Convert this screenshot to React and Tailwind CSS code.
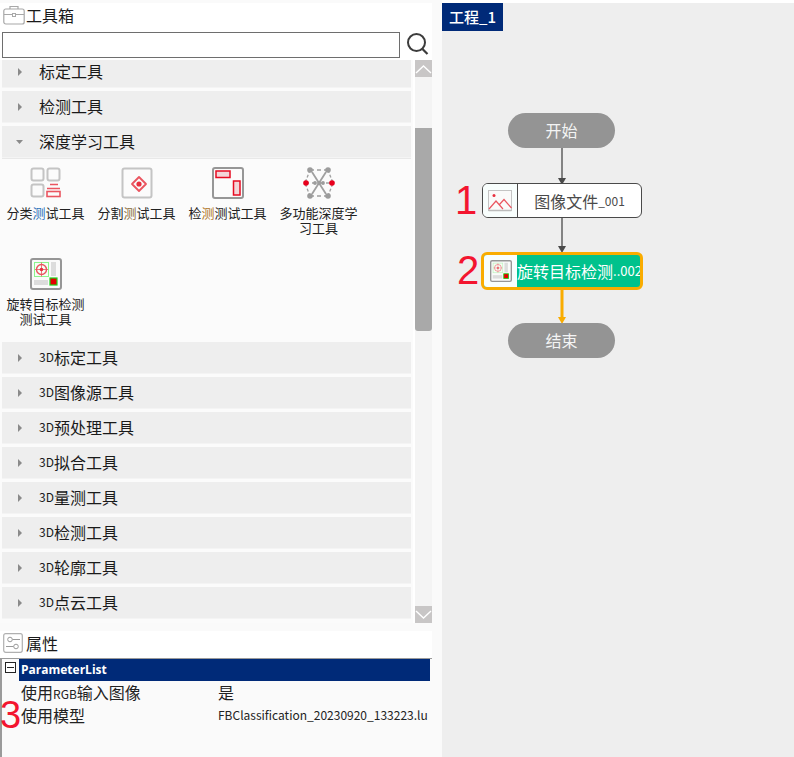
import React from 'react'

const cjk = "font-['Noto_Sans_CJK_SC','Noto_Sans',sans-serif]"

function Row({ name, prefix, open, className }) {
    return (
        <div className={`h-[32px] mb-[3px] pl-[37px] pb-[1px] relative bg-[#eeeeee] flex items-center text-[16px] text-[#1a1a1a] border-b border-[#f4f4f4] ${className || ''}`}>
            <svg width="8" height="8" viewBox="0 0 8 8" className='absolute left-[14px] top-[12px]'>
                {open ? <path d="M0 2 L7 2 L3.5 6 Z" fill="#8a8a8a" /> : <path d="M2 0 L6 4 L2 8 Z" fill="#8a8a8a" />}
            </svg>
            {prefix && <span className='text-[12px]'>{prefix}</span>}
            <span>{name}</span>
        </div>
    )
}

function ClassifyIcon() {
    return (
        <svg width="32" height="32" viewBox="0 0 32 32" fill="none">
            <rect x="1.5" y="1.5" width="12" height="12" rx="2" stroke="#c4c4c4" strokeWidth="2" />
            <rect x="17.5" y="1.5" width="12" height="12" rx="2" stroke="#c4c4c4" strokeWidth="2" />
            <rect x="1.5" y="17.5" width="12" height="12" rx="2" stroke="#c4c4c4" strokeWidth="2" />
            <path d="M20 17.5 H28 M17 21.5 H30" stroke="#ea5560" strokeWidth="1.6" />
            <rect x="17" y="24.5" width="13" height="5" stroke="#ea5560" strokeWidth="1.6" />
        </svg>
    )
}

function SegmentIcon() {
    return (
        <svg width="32" height="32" viewBox="0 0 32 32" fill="none">
            <rect x="1.5" y="1.5" width="29" height="29" rx="2" stroke="#c4c4c4" strokeWidth="2" />
            <path d="M18 10 L25 17 L18 24 L11 17 Z" stroke="#ea5560" strokeWidth="1.8" strokeLinejoin="round" />
            <circle cx="18" cy="17" r="2.6" fill="#e8303f" />
        </svg>
    )
}

function DetectIcon() {
    return (
        <svg width="32" height="32" viewBox="0 0 32 32" fill="none">
            <rect x="1" y="1" width="30" height="30" rx="2" stroke="#969696" strokeWidth="2" />
            <rect x="4" y="4" width="14" height="6.5" fill="#f3d5d8" stroke="#e60b22" strokeWidth="1.5" />
            <rect x="21.5" y="14" width="6.5" height="14" fill="#f3d5d8" stroke="#e60b22" strokeWidth="1.5" />
        </svg>
    )
}

function NetIcon() {
    return (
        <svg width="32" height="32" viewBox="0 0 32 32" fill="none">
            <g stroke="#a0a0a0" strokeWidth="1.3">
                <path d="M7 3 L2 16 L7 29 M25 3 L30 16 L25 29" strokeDasharray="3 2" />
                <path d="M7 3 H25 M7 29 H25 M2 16 H30" strokeDasharray="4 3" />
                <path d="M9 5 L23 27 M23 5 L9 27" strokeWidth="1.8" />
            </g>
            <g fill="#9c9c9c">
                <circle cx="7" cy="3" r="2.8" />
                <circle cx="25" cy="3" r="2.8" />
                <circle cx="7" cy="29" r="2.8" />
                <circle cx="25" cy="29" r="2.8" />
                <circle cx="12" cy="16" r="1.9" />
                <circle cx="16" cy="16" r="1.9" />
                <circle cx="20" cy="16" r="1.9" />
            </g>
            <circle cx="3" cy="16" r="2.8" fill="#e8001c" />
            <circle cx="29" cy="16" r="2.8" fill="#e8001c" />
        </svg>
    )
}

function RotateIcon({ size = 32, faded }) {
    return (
        <svg width={size} height={size} viewBox="0 0 32 32" fill="none">
            <rect x="1" y="1" width="30" height="30" rx="2" fill="#fafafa" stroke="#969696" strokeWidth="2" />
            <rect x="4.5" y="4.5" width="14" height="14" fill="#f5fff5" stroke={faded ? "#bdf0bd" : "#8cf58c"} strokeWidth="1" />
            <circle cx="11.5" cy="11.5" r="5" stroke="#ea5560" strokeWidth="1.4" opacity={faded ? 0.6 : 1} />
            <path d="M11.5 4.5 V18.5 M5 11.5 H18" stroke="#ea5560" strokeWidth="0.8" opacity={faded ? 0.6 : 1} />
            <circle cx="11.5" cy="11.5" r="1.8" fill="#e8303f" opacity={faded ? 0.6 : 1} />
            <rect x="21" y="4" width="5" height="14" fill="#dcdcdc" />
            <rect x="4" y="22" width="14" height="5" fill="#dcdcdc" />
            <rect x="20" y="20" width="7" height="7" fill="#e60000" stroke="#19d419" strokeWidth="1.2" />
        </svg>
    )
}

function ImageIcon() {
    return (
        <svg width="24" height="22" viewBox="0 0 24 22" fill="none">
            <rect x="0.5" y="0.5" width="23" height="20" fill="#fafafa" stroke="#c4c4c4" />
            <path d="M0.5 20.5 H23.5" stroke="#bcbcbc" strokeWidth="1.5" />
            <circle cx="6" cy="5.5" r="1.5" fill="#e8303f" />
            <path d="M1 19 L8 11 L15 19 M11 15 L16 9.5 L23.5 18" stroke="#ea5560" strokeWidth="1.2" />
        </svg>
    )
}

function Tool({ icon, label, className }) {
    return (
        <div className={`w-[91px] flex flex-col items-center text-center text-[13px] leading-[15px] text-[#222] ${className || ''}`}>
            <div className='h-[32px] mb-[6px]'>{icon}</div>
            <div className='w-[80px]'>{label}</div>
        </div>
    )
}

function Pill({ text }) {
    return (
        <div className='w-[107px] h-[35px] pb-[2px] rounded-full bg-[#949494] text-[#f4f4f4] text-[16px] flex items-center justify-center'>
            {text}
        </div>
    )
}

// connector between flow nodes
function Arrow({ height, color = "#4a4a4a", thick }) {
    return (
        <svg width="14" height={height} viewBox={`0 0 14 ${height}`}>
            <path d={`M7 0 V${height - 6}`} stroke={color} strokeWidth={thick ? 3 : 1.3} />
            <path d={`M3 ${height - 7} H11 L7 ${height} Z`} fill={color} />
        </svg>
    )
}

export default function App() {
    return (
        <div className={`w-[794px] h-[757px] overflow-hidden bg-white flex ${cjk}`}>
            {/* left side */}
            <div className='w-[432px] flex flex-col shrink-0'>
                <div className='h-[3px] bg-[#fafafa]' />
                <div className='h-[26px] flex items-center pl-[3px] pb-[2px] text-[16px] text-[#1a1a1a]'>
                    <svg width="22" height="20" viewBox="0 0 22 20" fill="none" className='mr-[1px]'>
                        <rect x="0.8" y="4" width="20.4" height="15" rx="2" stroke="#a8a8a8" strokeWidth="1.2" />
                        <path d="M7 4 V1.5 H15 V4 M1 9.5 H9 M13 9.5 H21" stroke="#a8a8a8" strokeWidth="1.2" />
                        <rect x="9.5" y="8.5" width="3" height="3" stroke="#a8a8a8" />
                    </svg>
                    <span>工具箱</span>
                </div>
                <div className='h-[31px] flex items-start pl-[2px]'>
                    <div className='w-[398px] h-[26px] mt-[3px] border border-[#6e6e6e] bg-white' />
                    <svg width="24" height="24" viewBox="0 0 24 24" fill="none" className='ml-[6px] mt-[3px]'>
                        <circle cx="10.5" cy="10.5" r="8.5" stroke="#3c3c3c" strokeWidth="2" />
                        <path d="M16.5 17 L21.5 22" stroke="#3c3c3c" strokeWidth="2.2" />
                    </svg>
                </div>

                <div className='h-[563px] flex overflow-hidden'>
                    <div className='w-[413px] pl-[2px] pr-[2px] bg-[#fbfbfb]'>
                        <Row name="标定工具" className='-mt-[4px]' />
                        <Row name="检测工具" />
                        <Row name="深度学习工具" open />
                        <div className='h-[181px] -mt-[3px] pt-[8px] bg-[#fbfbfb] border-t border-[#e8e8e8]'>
                            <div className='flex'>
                                <Tool icon={<ClassifyIcon />} label={<span>分类<span className='text-[#1f6fb8]'>测</span>试工具</span>} className='-ml-[2px]' />
                                <Tool icon={<SegmentIcon />} label={<span>分割<span className='text-[#8a6d3b]'>测</span>试工具</span>} />
                                <Tool icon={<DetectIcon />} label={<span>检<span className='text-[#b0761f]'>测</span>测试工具</span>} />
                                <Tool icon={<NetIcon />} label="多功能深度学习工具" />
                            </div>
                            <Tool
                                icon={<RotateIcon />}
                                label="旋转目标检测测试工具"
                                className='mt-[23px] -ml-[2px]'
                            />
                        </div>
                        <div className='h-[3px]' />
                        <Row prefix="3D" name="标定工具" />
                        <Row prefix="3D" name="图像源工具" />
                        <Row prefix="3D" name="预处理工具" />
                        <Row prefix="3D" name="拟合工具" />
                        <Row prefix="3D" name="量测工具" />
                        <Row prefix="3D" name="检测工具" />
                        <Row prefix="3D" name="轮廓工具" />
                        <Row prefix="3D" name="点云工具" />
                    </div>
                    {/* scrollbar */}
                    <div className='w-[17px] ml-[2px] bg-[#f4f4f4] flex flex-col'>
                        <div className='h-[17px] bg-[#c8c6c6] flex items-center justify-center'>
                            <svg width="17" height="10" viewBox="0 0 17 10" fill="none"><path d="M1 9 L8.5 2 L16 9" stroke="#fff" strokeWidth="1.4" /></svg>
                        </div>
                        <div className='h-[51px]' />
                        <div className='h-[203px] bg-[#a9a9a9] rounded-b-[3px]' />
                        <div className='h-[275px]' />
                        <div className='h-[17px] bg-[#c8c6c6] flex items-center justify-center'>
                            <svg width="17" height="10" viewBox="0 0 17 10" fill="none"><path d="M1 1 L8.5 8 L16 1" stroke="#fff" strokeWidth="1.4" /></svg>
                        </div>
                    </div>
                </div>

                {/* properties */}
                <div className='h-[8px] bg-[#fafafa]' />
                <div className='h-[27px] flex items-center pl-[3px] pb-[3px] text-[16px] text-[#1a1a1a]'>
                    <svg width="20" height="20" viewBox="0 0 20 20" fill="none" className='mr-[3px]'>
                        <rect x="0.7" y="0.7" width="18.6" height="18.6" rx="2" stroke="#b0b0b0" strokeWidth="1.2" />
                        <circle cx="7" cy="6.5" r="2.3" stroke="#9a9a9a" />
                        <circle cx="13" cy="13.5" r="2.3" stroke="#9a9a9a" />
                        <path d="M9.5 6.5 H17 M3 13.5 H10.5" stroke="#9a9a9a" />
                    </svg>
                    <span>属性</span>
                </div>
                <div className='relative flex-1 bg-[#fafafa] border-t border-l-2 border-[#9a9a9a]'>
                    <div className='absolute left-[3px] top-[3px] w-[11px] h-[11px] border border-[#222] flex items-center justify-center bg-white'>
                        <div className='w-[7px] h-[1px] bg-[#222]' />
                    </div>
                    <div className='ml-[17px] mr-[2px] h-[22px] bg-[#002a78] text-white text-[12px] font-bold flex items-center pl-[2px] font-["Open_Sans",sans-serif]'>ParameterList</div>
                    <div className='ml-[19px] h-[22px] flex items-center text-[16px] text-[#222]'>
                        <span className='w-[197px]'>使用<span className='text-[12px]'>RGB</span>输入图像</span>
                        <span>是</span>
                    </div>
                    <div className='ml-[19px] h-[23px] flex items-center text-[16px] text-[#222]'>
                        <span className='w-[197px]'>使用模型</span>
                        <span className='text-[12px]'>FBClassification_20230920_133223.lu</span>
                    </div>
                    <div className="absolute -left-[2px] top-[34px] text-[#f3152f] text-[38px] leading-[44px] font-['Liberation_Sans',sans-serif]">3</div>
                </div>
            </div>

            <div className='w-[10px] shrink-0 bg-[#fafafa]' />

            {/* flow canvas */}
            <div className='relative flex-1 mt-[3px] bg-[#eeeeee]'>
                <div className='w-[61px] h-[28px] bg-[#002a78] text-white text-[15px] font-medium flex items-center justify-center'>工程_1</div>

                <div className='absolute left-[66px] top-[110px] flex flex-col items-center'>
                    <Pill text="开始" />
                    <Arrow height={37} />
                </div>

                <div className="absolute left-[13px] top-[175px] text-[#f3152f] text-[40px] leading-[44px] font-['Liberation_Sans',sans-serif]">1</div>
                <div className='absolute left-[40px] top-[180px] w-[160px] h-[35px] rounded-[6px] border border-[#4a4a4a] bg-white flex overflow-hidden'>
                    <div className='w-[35px] bg-[#f8fefd] border-r border-[#4a4a4a] flex items-center justify-center shrink-0'><ImageIcon /></div>
                    <div className='flex-1 flex items-center justify-center text-[16px] text-[#4a4a4a]'>
                        图像文件<span className='text-[12px]'>_001</span>
                    </div>
                </div>
                <div className='absolute left-[113px] top-[215px] flex'><Arrow height={35} /></div>

                <div className="absolute left-[15px] top-[245px] text-[#f3152f] text-[40px] leading-[44px] font-['Liberation_Sans',sans-serif]">2</div>
                <div className='absolute left-[39px] top-[249px] w-[162px] h-[38px] rounded-[6px] border-[3px] border-[#f9ac00] bg-[#00c28c] flex overflow-hidden'>
                    <div className='w-[33px] bg-[#f8fefd] flex items-center justify-center shrink-0'><RotateIcon size={22} faded /></div>
                    <div className='flex-1 flex items-center text-[16px] text-white whitespace-nowrap'>
                        旋转目标检测<span className='text-[13px]'>..002</span>
                    </div>
                </div>
                <div className='absolute left-[113px] top-[287px] flex'><Arrow height={34} color="#f9ac00" thick /></div>

                <div className='absolute left-[66px] top-[320px]'><Pill text="结束" /></div>
            </div>
        </div>
    )
}
